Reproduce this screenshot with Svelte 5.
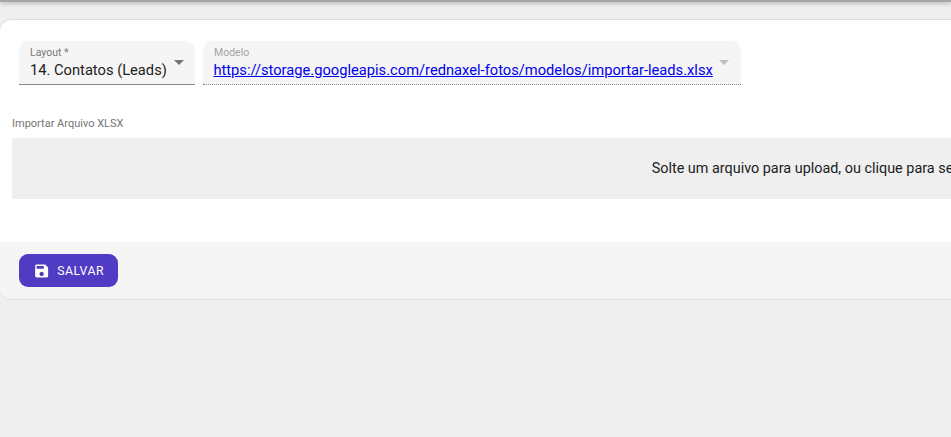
<script lang="ts">
  let layout = $state('14. Contatos (Leads)')
  const modelUrl = 'https://storage.googleapis.com/rednaxel-fotos/modelos/importar-leads.xlsx'
</script>

<div class="page">
  <div class="topbar"></div>
  <div class="card">
    <div class="content">
      <div class="fields">
        <div class="field layout-field">
          <span class="label">Layout *</span>
          <span class="value">{layout}</span>
          <span class="arrow"></span>
        </div>
        <div class="field model-field">
          <span class="label muted">Modelo</span>
          <a class="value" href={modelUrl}>{modelUrl}</a>
          <span class="arrow muted-arrow"></span>
        </div>
      </div>

      <div class="upload">
        <div class="upload-label">Importar Arquivo XLSX</div>
        <div class="dropzone">
          <p>Solte um arquivo para upload, ou clique para selecionar</p>
        </div>
      </div>
    </div>

    <div class="toolbar">
      <button type="button" class="save">
        <svg viewBox="0 0 24 24" width="18" height="18" aria-hidden="true">
          <path
            fill="currentColor"
            d="M17 3H5c-1.11 0-2 .9-2 2v14c0 1.1.89 2 2 2h14c1.1 0 2-.9 2-2V7l-4-4zm-5 16c-1.66 0-3-1.34-3-3s1.34-3 3-3 3 1.34 3 3-1.34 3-3 3zm3-10H5V5h10v4z"
          />
        </svg>
        Salvar
      </button>
    </div>
  </div>
</div>

<style>
  :global(html),
  :global(body) {
    overflow: hidden;
  }

  .page {
    height: 437px;
    background: #efefef;
    font-family: Roboto, 'Liberation Sans', sans-serif;
    overflow: hidden;
  }

  .topbar {
    height: 2px;
    background: #a6a6a6;
    box-shadow: 0 1px 4px rgba(0, 0, 0, 0.4);
  }

  .card {
    width: 1658px;
    margin: 17px 0 0 -1px;
    background: #fff;
    border: 1px solid #dedede;
    border-radius: 12px;
    box-sizing: border-box;
    height: 281px;
    display: flex;
    flex-direction: column;
    overflow: hidden;
  }

  .content {
    flex: 1;
    padding: 21px 12px 0;
  }

  .fields {
    display: flex;
    gap: 8px;
    padding-left: 7px;
  }

  .field {
    position: relative;
    box-sizing: border-box;
    height: 44px;
    padding: 6px 10px 0 11px;
    background: #f5f5f5;
    border-radius: 10px 10px 0 0;
    border-bottom: 1px solid #8a8a8a;
    display: flex;
    flex-direction: column;
  }

  .layout-field {
    width: 176px;
  }

  .model-field {
    width: 538px;
    border-bottom: 1px dotted #8a8a8a;
  }

  .label {
    font-size: 10.5px;
    line-height: 12px;
    color: #757575;
  }

  .label.muted {
    color: #a3a3a3;
  }

  .value {
    margin-top: 1px;
    font-size: 14.7px;
    line-height: 20px;
    color: #212121;
    white-space: nowrap;
  }

  a.value {
    margin-left: -0.6px;
    color: #0000ee;
  }

  .arrow {
    position: absolute;
    right: 11px;
    top: 19px;
    border-left: 5px solid transparent;
    border-right: 5px solid transparent;
    border-top: 5px solid #757575;
  }

  .muted-arrow {
    right: 12px;
    border-top-color: #bdbdbd;
  }

  .upload {
    margin-top: 32px;
  }

  .upload-label {
    font-size: 11px;
    line-height: 14px;
    color: #757575;
  }

  .dropzone {
    margin-top: 7px;
    height: 61px;
    background: #efefef;
    display: flex;
    align-items: center;
    justify-content: center;
  }

  .dropzone p {
    margin: 0;
    font-size: 14.4px;
    color: #212121;
  }

  .toolbar {
    height: 57px;
    box-sizing: border-box;
    padding: 12px 19px;
    background: #f5f5f5;
  }

  .save {
    display: flex;
    align-items: center;
    gap: 7px;
    box-sizing: border-box;
    width: 99px;
    height: 33px;
    padding: 0 14px;
    border: none;
    border-radius: 9px;
    background: #503bc5;
    color: #fff;
    font-family: inherit;
    font-size: 12.25px;
    font-weight: 400;
    text-transform: uppercase;
    letter-spacing: 0.5px;
  }
</style>
